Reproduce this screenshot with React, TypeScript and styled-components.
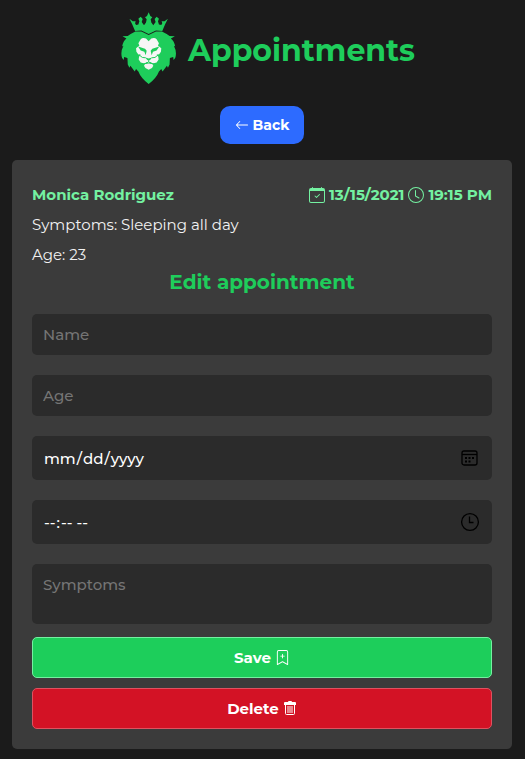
import React from "react";
import styled, { createGlobalStyle } from "styled-components";
import { BsArrowLeft, BsBookmarkPlus, BsCalendarCheck, BsClock } from "react-icons/bs";

const GlobalStyle = createGlobalStyle`
  *, *::before, *::after { box-sizing: border-box; }
  body {
    margin: 0;
    background: #1b1b1b;
    color: #fff;
    font-family: Montserrat, Inter, sans-serif;
    font-size: 15px;
  }
  h1, h2, p { margin: 0; }
`;

const Page = styled.div`
  display: flex;
  flex-direction: column;
  align-items: center;
  padding: 12px 13px 10px 12px;
`;

const Header = styled.header`
  display: flex;
  align-items: center;
  gap: 12px;
  margin-right: -12px;
  margin-bottom: 22px;
`;

const Logo = styled.svg`
  width: 55px;
  height: 72px;
`;

const Heading = styled.h1`
  color: #1ecd5b;
  font-size: 30px;
  font-weight: 700;
  line-height: 40px;
  padding-top: 6px;
`;

const BackButton = styled.button`
  display: flex;
  align-items: center;
  justify-content: center;
  gap: 4px;
  height: 38px;
  padding: 0 15px;
  margin-bottom: 16px;
  border: 0;
  border-radius: 10px;
  background: #2d6bff;
  color: #fff;
  font: inherit;
  font-size: 14px;
  font-weight: 700;
  cursor: pointer;
`;

const Card = styled.main`
  width: 100%;
  max-width: 500px;
  padding: 20px;
  border-radius: 5px;
  background: #3b3b3b;
`;

const Summary = styled.div`
  display: flex;
  justify-content: space-between;
  color: #74f1a1;
  font-weight: 700;
  line-height: 30px;
`;

const Schedule = styled.span`
  display: flex;
  align-items: center;
  gap: 4px;
`;

const Detail = styled.p`
  line-height: 30px;
  color: #f2f2f2;
`;

const FormTitle = styled.h2`
  color: #1ecd5b;
  font-size: 20px;
  font-weight: 700;
  line-height: 24px;
  text-align: center;
`;

const Form = styled.form`
  display: flex;
  flex-direction: column;
  gap: 20px;
  margin-top: 20px;
`;

const Field = styled.label<{ $tall?: boolean }>`
  display: flex;
  align-items: center;
  height: ${(p) => (p.$tall ? 44 : 41)}px;
  padding: 0 12px 0 11px;
  border-radius: 5px;
  background: #2b2b2b;
  color: #000;
`;

const Input = styled.input`
  flex: 1;
  min-width: 0;
  padding: 0;
  border: 0;
  outline: 0;
  background: transparent;
  color: #fff;
  font: inherit;
  font-weight: 500;
  &::placeholder { color: #757575; }
  &::-webkit-calendar-picker-indicator { display: none; }
  &::-webkit-datetime-edit { padding: 0; }
`;

const TextArea = styled.textarea`
  display: block;
  height: 60px;
  padding: 11px;
  border: 0;
  border-radius: 5px;
  outline: 0;
  resize: none;
  background: #2b2b2b;
  color: #fff;
  font: inherit;
  font-weight: 500;
  line-height: 20px;
  &::placeholder { color: #757575; }
`;

const FieldIcon = styled.svg`
  width: 20px;
  height: 20px;
  fill: none;
  stroke: currentColor;
`;

const Actions = styled.div`
  display: flex;
  flex-direction: column;
  gap: 10px;
  margin-top: -7px;
`;

const ActionButton = styled.button<{ $danger?: boolean }>`
  display: flex;
  align-items: center;
  justify-content: center;
  gap: 4px;
  height: 41px;
  border: 1px solid ${(p) => (p.$danger ? "#de5260" : "#74f1a1")};
  border-radius: 5px;
  background: ${(p) => (p.$danger ? "#d31225" : "#1dce5b")};
  color: #fff;
  font: inherit;
  font-weight: 700;
  cursor: pointer;
`;

const LionLogo = () => (
  <Logo viewBox="32 22 165 217" aria-hidden="true">
    <g fill="#1ecd5b">
      <path d="M115 23 L110 34 L104 38 L109 44 L107 54 L101 62 L94 52 L97 43 L91 36 L84 42 L87 50 L84 60 L77 61 L74 56 L76 50 L67 50 L57 42 L65 58 L74 79 L93 78 L115 88 L137 78 L156 79 L165 58 L173 42 L163 50 L154 50 L156 56 L153 61 L146 60 L143 50 L146 42 L139 36 L133 43 L136 52 L129 62 L123 54 L121 44 L126 38 L120 34 Z" />
      <path d="M115 91 L93 81 L75 81 Q61 88 52 94 L36 95 L48 102 Q38 110 35 126 L39 124 Q29 143 35 161 L40 167 L41 158 L51 161 L52 180 L57 190 L60 184 L73 201 L77 194 L84 201 Q91 220 115 239 Q139 220 146 201 L153 194 L157 201 L170 184 L173 190 L178 180 L179 161 L189 158 L190 167 L195 161 Q201 143 191 124 L195 126 Q192 110 182 102 L194 95 L178 94 Q169 88 155 81 L137 81 Z" />
    </g>
    <path
      fill="#f6f6f6"
      d="M115 110 L107 102 Q97 98 91 104 L84 116 L87 123 L77 131 L78 142 L84 150 L91 150 L86 157 L85 165 L91 174 L103 177 L109 173 L115 175 L121 173 L127 177 L139 174 L145 165 L144 157 L139 150 L146 150 L152 142 L153 131 L143 123 L146 116 L139 104 Q133 98 123 102 Z"
    />
    <path fill="#f2f2f2" d="M115 177 L104 179 L101 184 L105 191 L115 196 L125 191 L129 184 L126 179 Z" />
    <path
      fill="#1ecd5b"
      d="M83 126 L104 133 L109 139 L106 152 L102 142 L91 138 Z M147 126 L126 133 L121 139 L124 152 L128 142 L139 138 Z M105 159 L115 162 L125 159 L120 166 L115 169 L110 166 Z"
    />
    <path fill="none" stroke="#1ecd5b" strokeWidth="3" d="M86 151 L96 159 L106 160 M144 151 L134 159 L124 160 M115 168 V172 M100 178 L108 177 L115 172 L122 177 L130 178" />
  </Logo>
);

const TrashIcon = () => (
  <svg width="14" height="15" viewBox="0 0 14 15" fill="currentColor" aria-hidden="true">
    <path d="M5 1 Q5 0 6 0 H8 Q9 0 9 1 H12 Q13 1 13 2 V4 H1 V2 Q1 1 2 1 Z" />
    <path
      fill="none"
      stroke="currentColor"
      d="M2.5 4 V12.5 Q2.5 13.5 3.5 13.5 H10.5 Q11.5 13.5 11.5 12.5 V4 M5 5 V12 M7 5 V12 M9 5 V12"
    />
  </svg>
);

export default function App() {
  return (
    <>
      <GlobalStyle />
      <Page>
        <Header>
          <LionLogo />
          <Heading>Appointments</Heading>
        </Header>
        <BackButton type="button">
          <BsArrowLeft size={14} /> Back
        </BackButton>
        <Card>
          <Summary>
            <span>Monica Rodriguez</span>
            <Schedule>
              <BsCalendarCheck size={16} /> 13/15/2021 <BsClock size={16} /> 19:15 PM
            </Schedule>
          </Summary>
          <Detail>Symptoms: Sleeping all day</Detail>
          <Detail>Age: 23</Detail>
          <FormTitle>Edit appointment</FormTitle>
          <Form>
            <Field>
              <Input type="text" placeholder="Name" aria-label="Name" />
            </Field>
            <Field>
              <Input type="text" placeholder="Age" aria-label="Age" />
            </Field>
            <Field $tall>
              <Input type="date" aria-label="Date" />
              <FieldIcon viewBox="0 0 20 20" aria-hidden="true">
                <rect x="2" y="3" width="15" height="14" rx="2" strokeWidth="1.3" />
                <path d="M2 6.5 H17" strokeWidth="1.3" />
                <path d="M5 10 H15 M5 13.5 H11" strokeWidth="2" strokeDasharray="2 1.5" />
              </FieldIcon>
            </Field>
            <Field $tall>
              <Input type="time" aria-label="Time" />
              <FieldIcon viewBox="0 0 20 20" aria-hidden="true">
                <circle cx="10" cy="10" r="8.4" strokeWidth="1.3" />
                <path d="M9.5 4.5 V10.5 H13.5" strokeWidth="1.3" />
              </FieldIcon>
            </Field>
            <TextArea placeholder="Symptoms" aria-label="Symptoms" />
            <Actions>
              <ActionButton type="button">
                Save <BsBookmarkPlus />
              </ActionButton>
              <ActionButton type="button" $danger>
                Delete <TrashIcon />
              </ActionButton>
            </Actions>
          </Form>
        </Card>
      </Page>
    </>
  );
}
